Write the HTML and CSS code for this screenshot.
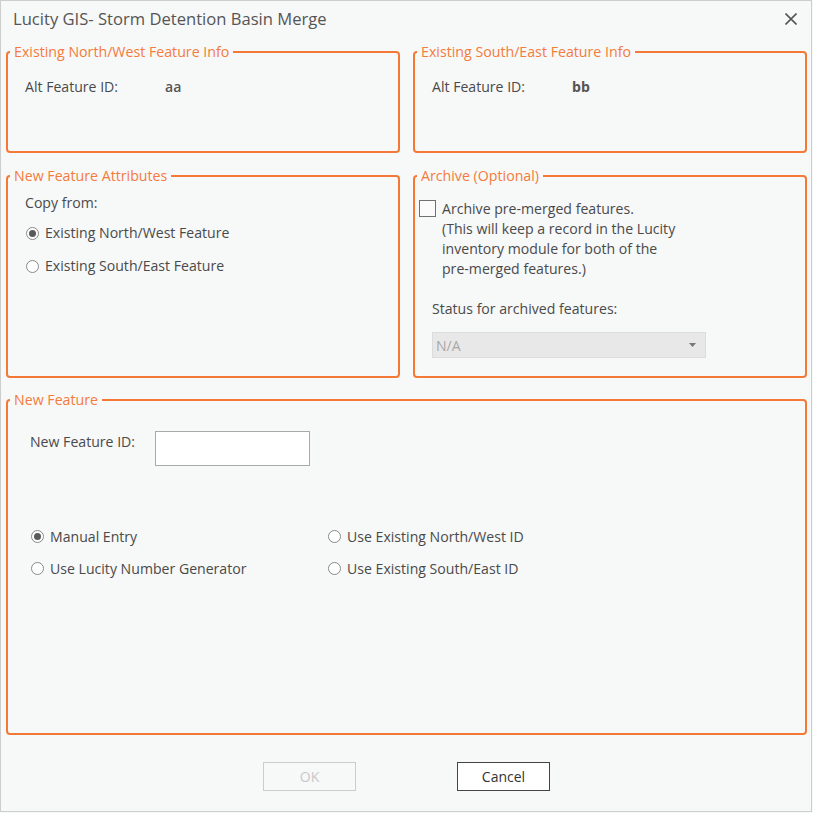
FILE: index.html
```html
<!DOCTYPE html>
<html>
<head>
<meta charset="utf-8">
<link rel="stylesheet" href="styles.css">
</head>
<body>
<div class="window">
  <div class="titlebar">
    <span class="title">Lucity GIS- Storm Detention Basin Merge</span>
    <svg class="close" width="12" height="12" viewBox="0 0 12 12"><path d="M0.5 0.5 L11.5 11.5 M11.5 0.5 L0.5 11.5" stroke="#555" stroke-width="1.6" fill="none"/></svg>
  </div>
  <div class="content">
    <div class="row row1">
      <fieldset class="group info">
        <legend>Existing North/West Feature Info</legend>
        <div class="field"><span class="lbl">Alt Feature ID:</span><span class="val">aa</span></div>
      </fieldset>
      <fieldset class="group info">
        <legend>Existing South/East Feature Info</legend>
        <div class="field"><span class="lbl">Alt Feature ID:</span><span class="val bold">bb</span></div>
      </fieldset>
    </div>
    <div class="row row2">
      <fieldset class="group attrs">
        <legend>New Feature Attributes</legend>
        <div class="copy">Copy from:</div>
        <div class="radio-list">
          <label class="radio"><span class="dot checked"></span>Existing North/West Feature</label>
          <label class="radio"><span class="dot"></span>Existing South/East Feature</label>
        </div>
      </fieldset>
      <fieldset class="group archive">
        <legend>Archive (Optional)</legend>
        <div class="check-row">
          <span class="box"></span>
          <span class="check-text">Archive pre-merged features.<br>(This will keep a record in the Lucity<br>inventory module for both of the<br>pre-merged features.)</span>
        </div>
        <div class="status-lbl">Status for archived features:</div>
        <div class="select"><span>N/A</span><svg width="7" height="4" viewBox="0 0 7 4"><path d="M0 0 H7 L3.5 4 Z" fill="#777"/></svg></div>
      </fieldset>
    </div>
    <fieldset class="group newfeat">
      <legend>New Feature</legend>
      <div class="id-row"><span class="id-lbl">New Feature ID:</span><span class="input"></span></div>
      <div class="opts">
        <label class="radio"><span class="dot checked"></span>Manual Entry</label>
        <label class="radio"><span class="dot"></span>Use Existing North/West ID</label>
        <label class="radio"><span class="dot"></span>Use Lucity Number Generator</label>
        <label class="radio"><span class="dot"></span>Use Existing South/East ID</label>
      </div>
    </fieldset>
    <div class="buttons">
      <button class="btn disabled">OK</button>
      <button class="btn primary">Cancel</button>
    </div>
  </div>
</div>
</body>
</html>
```

FILE: styles.css
```css
* { box-sizing: border-box; }
html, body { margin: 0; padding: 0; background: #f7f8f8; }
body { font-family: "Open Sans", "Noto Sans", sans-serif; font-size: 14.1px; color: #4a4a4a; }

.window {
  width: 812px;
  height: 812px;
  border: 1px solid #cdcdcd;
  background: #f7f8f8;
  display: flex;
  flex-direction: column;
}

.titlebar {
  height: 42px;
  display: flex;
  align-items: flex-start;
  justify-content: space-between;
  padding: 7px 14px 0 12px;
}
.title { font-size: 16.6px; color: #555; line-height: 22px; }
.close { margin-top: 5px; }

.content {
  display: flex;
  flex-direction: column;
  padding: 0 4px 0 5px;
}

.row {
  display: grid;
  grid-template-columns: 394px 394px;
  column-gap: 13px;
}
.row1 { height: 110px; }
.row2 { height: 211px; margin-top: 14px; }

.group {
  margin: 0;
  padding: 0;
  border: 2px solid #f47936;
  border-radius: 4px;
  min-width: 0;
}
.group legend {
  margin-left: 2px;
  padding: 0 4px 0 4px;
  font-size: 14.2px;
  line-height: 18px;
  color: #f47b3c;
}

.field { display: flex; padding: 16px 0 0 17px; line-height: 20px; }
.lbl { width: 140px; }
.val { font-weight: 600; color: #555; }
.val.bold { font-weight: 700; }

.copy { padding: 8px 0 0 17px; line-height: 20px; }
.radio-list { display: flex; flex-direction: column; gap: 13px; padding: 10px 0 0 18px; }
.radio { display: flex; align-items: center; line-height: 20px; gap: 6px; }
.dot {
  width: 13px; height: 13px;
  border: 1px solid #8a8a8a;
  border-radius: 50%;
  background: #fff;
  position: relative;
  flex: none;
}
.dot.checked::after {
  content: "";
  position: absolute;
  left: 2px; top: 2px;
  width: 7px; height: 7px;
  border-radius: 50%;
  background: #5a5a5a;
}

.check-row { display: flex; padding: 14px 0 0 4px; gap: 6px; }
.box { width: 17px; height: 17px; border: 1px solid #707070; background: #fbfbfb; flex: none; margin-top: 1px; }
.check-text { line-height: 20px; }
.status-lbl { padding: 20px 0 0 17px; line-height: 20px; }
.select {
  margin: 13px 0 0 17px;
  width: 274px; height: 26px;
  background: #e8e8e8;
  border: 1px solid #dcdcdc;
  display: flex; align-items: center; justify-content: space-between;
  padding: 0 9px 0 3px;
  color: #a8a8a8;
}

.newfeat { height: 344px; margin-top: 13px; }
.id-row { display: flex; padding: 23px 0 0 22px; align-items: flex-start; }
.id-lbl { width: 125px; line-height: 20px; }
.input { width: 155px; height: 35px; background: #fff; border: 1px solid #a9a9a9; margin-top: -1px; }
.opts {
  display: grid;
  grid-template-columns: 297px auto;
  row-gap: 11px;
  padding: 60px 0 0 23px;
}
.opts .radio { line-height: 21px; }

.buttons {
  display: flex;
  justify-content: center;
  gap: 101px;
  margin-top: 27px;
}
.btn {
  width: 93px; height: 29px;
  font-family: inherit; font-size: 14px;
  background: #fff;
  padding: 0;
}
.btn.disabled { border: 1px solid #cccccc; color: #c8c8c8; background: #f7f8f8; }
.btn.primary { border: 1px solid #444; color: #333; }
```
